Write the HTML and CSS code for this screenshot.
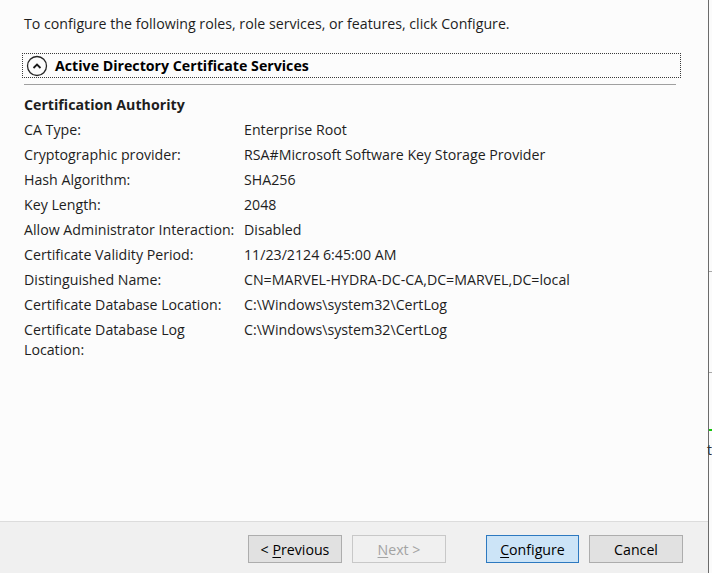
FILE: index.html
```html
<!DOCTYPE html>
<html lang="en">
<head>
    <meta charset="UTF-8">
    <title>Confirmation</title>
    <link rel="stylesheet" href="styles.css">
</head>
<body>
    <div class="dialog">
        <div class="content">
            <p class="intro">To configure the following roles, role services, or features, click Configure.</p>

            <div class="section-head">
                <svg class="collapse" width="22" height="22" viewBox="0 0 22 22">
                    <circle cx="11" cy="11" r="9.5" fill="none" stroke="#262626" stroke-width="1.3"/>
                    <path d="M7.5 13 L11 9.5 L14.5 13" fill="none" stroke="#1a1a1a" stroke-width="1.8"/>
                </svg>
                <span>Active Directory Certificate Services</span>
            </div>
            <div class="rule"></div>

            <h2>Certification Authority</h2>
            <div class="props">
                <div>CA Type:</div><div>Enterprise Root</div>
                <div>Cryptographic provider:</div><div>RSA#Microsoft Software Key Storage Provider</div>
                <div>Hash Algorithm:</div><div>SHA256</div>
                <div>Key Length:</div><div>2048</div>
                <div>Allow Administrator Interaction:</div><div>Disabled</div>
                <div>Certificate Validity Period:</div><div>11/23/2124 6:45:00 AM</div>
                <div>Distinguished Name:</div><div>CN=MARVEL-HYDRA-DC-CA,DC=MARVEL,DC=local</div>
                <div>Certificate Database Location:</div><div>C:\Windows\system32\CertLog</div>
                <div>Certificate Database Log<br>Location:</div><div>C:\Windows\system32\CertLog</div>
            </div>
        </div>

        <div class="footer">
            <button class="btn">&lt; <u>P</u>revious</button>
            <button class="btn disabled"><u>N</u>ext &gt;</button>
            <button class="btn primary"><u>C</u>onfigure</button>
            <button class="btn">Cancel</button>
        </div>
    </div>

    <div class="behind">
        <div class="tick t1"></div>
        <div class="tick t2"></div>
        <div class="green"></div>
        <div class="letter">t</div>
    </div>
</body>
</html>
```

FILE: styles.css
```css
body {
    margin: 0;
    width: 712px;
    height: 573px;
    display: flex;
    font-family: 'Open Sans', 'Noto Sans', sans-serif;
    font-size: 14.2px;
    color: #1e1e1e;
    background: #fcfcfc;
    overflow: hidden;
}

.dialog {
    flex: 0 0 708px;
    display: flex;
    flex-direction: column;
    border-right: 1px solid #6b6b6b;
    background: #fcfcfc;
}

.content {
    flex: 1;
    padding: 14px 32px 0 24px;
}

.intro {
    margin: 0 0 19px;
    line-height: 20px;
}

.section-head {
    display: flex;
    align-items: center;
    gap: 7px;
    height: 23px;
    margin: 0 -5px 0 -2px;
    padding: 0 0 0 3px;
    border: 1px dotted #3a3a3a;
    font-weight: bold;
    color: #000;
}

.rule {
    height: 1px;
    background: #a0a0a0;
    margin-top: 6px;
}

h2 {
    margin: 10px 0 5px;
    font-size: 14.2px;
    font-weight: bold;
    line-height: 20px;
}

.props {
    display: grid;
    grid-template-columns: 220px 1fr;
    row-gap: 5px;
    line-height: 20px;
}

.footer {
    box-sizing: border-box;
    flex: 0 0 52px;
    display: flex;
    align-items: flex-start;
    padding: 13px 0 0 248px;
    gap: 10px;
    border-top: 1px solid #dcdcdc;
    background: #f0f0f0;
}

.btn {
    width: 94px;
    height: 28px;
    padding: 0;
    font-family: inherit;
    font-size: 14.2px;
    color: #000;
    background: #e1e1e1;
    border: 1px solid #adadad;
}

.btn u {
    text-underline-offset: 2px;
}

.btn.disabled {
    color: #a3a3a3;
    background: #f0f0f0;
    border-color: #c8c8c8;
}

.btn.primary {
    margin-left: 30px;
    width: 93px;
    background: #cce4f7;
    border-color: #2d79c0;
}

.behind {
    flex: 1;
    position: relative;
    background: #fbfbfb;
}

.tick {
    position: absolute;
    left: 0;
    width: 3px;
    height: 1px;
    background: #a8a8a8;
}

.t1 { top: 271px; }
.t2 { top: 372px; }

.green {
    position: absolute;
    left: 0;
    top: 429px;
    width: 3px;
    height: 2px;
    background: #16c60c;
}

.letter {
    position: absolute;
    left: -2px;
    top: 440px;
    font-size: 14px;
    color: #333;
}
```
